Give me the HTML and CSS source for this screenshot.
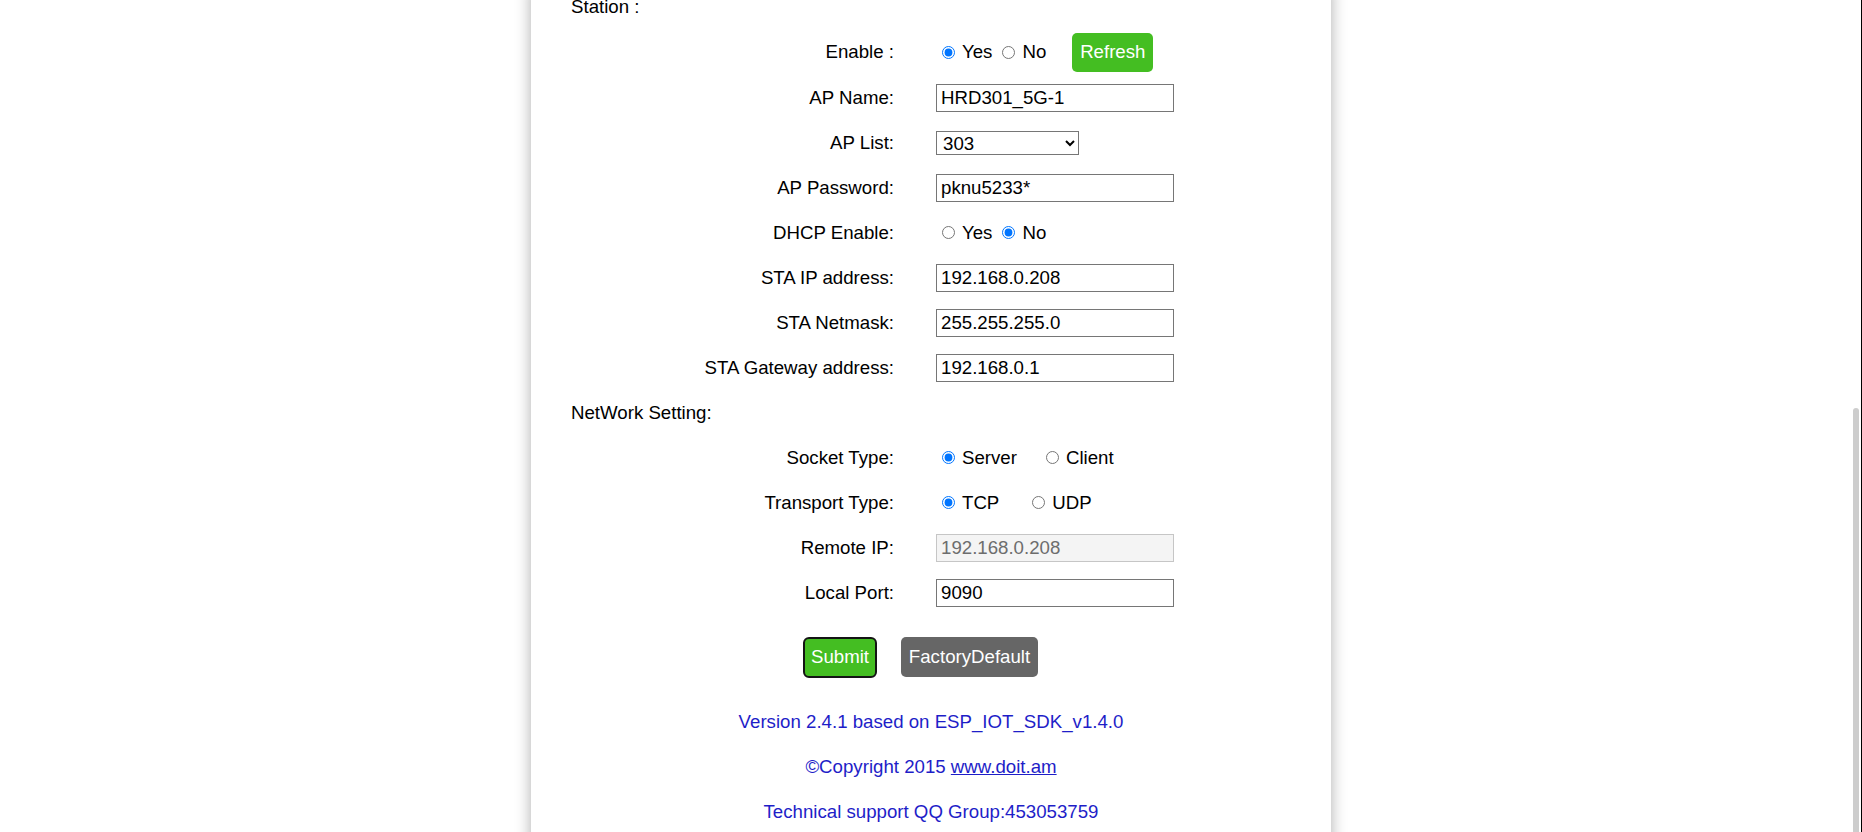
FILE: index.html
```html
<!DOCTYPE html>
<html lang="en">
<head>
<meta charset="utf-8">
<title>Config</title>
<link rel="stylesheet" href="styles.css">
</head>
<body>
<div class="panel">
  <div class="heading heading-top">Station :</div>

  <div class="row row-enable">
    <div class="label">Enable :</div>
    <div class="val">
      <label class="opt gap-yes"><input type="radio" name="sta" checked>Yes</label>
      <label class="opt"><input type="radio" name="sta">No</label>
      <button type="button" class="btn btn-green btn-refresh">Refresh</button>
    </div>
  </div>

  <div class="row">
    <div class="label">AP Name:</div>
    <div class="val"><input class="field" type="text" value="HRD301_5G-1"></div>
  </div>

  <div class="row">
    <div class="label">AP List:</div>
    <div class="val">
      <select class="picker">
        <option>303</option>
      </select>
    </div>
  </div>

  <div class="row">
    <div class="label">AP Password:</div>
    <div class="val"><input class="field" type="text" value="pknu5233*"></div>
  </div>

  <div class="row">
    <div class="label">DHCP Enable:</div>
    <div class="val">
      <label class="opt gap-yes"><input type="radio" name="dhcp">Yes</label>
      <label class="opt"><input type="radio" name="dhcp" checked>No</label>
    </div>
  </div>

  <div class="row">
    <div class="label">STA IP address:</div>
    <div class="val"><input class="field" type="text" value="192.168.0.208"></div>
  </div>

  <div class="row">
    <div class="label">STA Netmask:</div>
    <div class="val"><input class="field" type="text" value="255.255.255.0"></div>
  </div>

  <div class="row">
    <div class="label">STA Gateway address:</div>
    <div class="val"><input class="field" type="text" value="192.168.0.1"></div>
  </div>

  <div class="heading">NetWork Setting:</div>

  <div class="row">
    <div class="label">Socket Type:</div>
    <div class="val">
      <label class="opt gap-server"><input type="radio" name="sock" checked>Server</label>
      <label class="opt"><input type="radio" name="sock">Client</label>
    </div>
  </div>

  <div class="row">
    <div class="label">Transport Type:</div>
    <div class="val">
      <label class="opt gap-tcp"><input type="radio" name="proto" checked>TCP</label>
      <label class="opt"><input type="radio" name="proto">UDP</label>
    </div>
  </div>

  <div class="row">
    <div class="label">Remote IP:</div>
    <div class="val"><input class="field" type="text" value="192.168.0.208" disabled></div>
  </div>

  <div class="row">
    <div class="label">Local Port:</div>
    <div class="val"><input class="field" type="text" value="9090"></div>
  </div>

  <div class="actions">
    <button type="button" class="btn btn-green btn-submit">Submit</button>
    <button type="button" class="btn btn-gray btn-factory">FactoryDefault</button>
  </div>

  <div class="footer">
    <p class="foot-line">Version 2.4.1 based on ESP_IOT_SDK_v1.4.0</p>
    <p class="foot-line">&copy;Copyright 2015 <a href="#">www.doit.am</a></p>
    <p class="foot-line">Technical support QQ Group:453053759</p>
  </div>
</div>
<div class="scroll-thumb"></div>
<div class="window-edge"></div>
</body>
</html>
```

FILE: styles.css
```css
html, body {
  margin: 0;
  padding: 0;
  height: 100%;
  overflow: hidden;
  background: #ffffff;
}

body {
  display: flex;
  justify-content: center;
  align-items: flex-start;
  font-family: "Liberation Sans", Arial, sans-serif;
  font-size: 14pt;
  color: #000;
}

.panel {
  width: 800px;
  box-sizing: border-box;
  margin-top: -15px;
  padding: 0 40px 40px;
  min-height: calc(100vh + 60px);
  background: #fff;
  box-shadow: 0 0 15px rgba(0, 0, 0, 0.32);
}

.heading {
  height: 45px;
  display: flex;
  align-items: center;
}

.heading-top {
  height: 44px;
}

.row {
  display: grid;
  grid-template-columns: 323px 1fr;
  column-gap: 42px;
  align-items: center;
  height: 45px;
}

.row-enable {
  height: 46px;
}

.label {
  text-align: right;
  white-space: nowrap;
}

.val {
  display: flex;
  align-items: center;
}

.opt {
  display: inline-flex;
  align-items: center;
  white-space: nowrap;
}

.opt input {
  width: 13px;
  height: 13px;
  margin: 0 7px 0 6px;
}

.gap-yes {
  margin-right: 4px;
}

.gap-server {
  margin-right: 23px;
}

.gap-tcp {
  margin-right: 27px;
}

.field {
  box-sizing: border-box;
  width: 238px;
  height: 28px;
  margin: 0;
  padding: 0 4px;
  border: 1px solid #767676;
  border-radius: 0;
  font-family: "Liberation Sans", Arial, sans-serif;
  font-size: 14pt;
  color: #000;
  background: #fff;
}

.field:disabled {
  background: #f4f4f4;
  border-color: #c6c6c6;
  color: #6d6d6d;
}

.picker {
  box-sizing: border-box;
  width: 143px;
  height: 24px;
  margin: 0;
  padding: 0 2px;
  border: 1px solid #767676;
  border-radius: 0;
  font-family: "Liberation Sans", Arial, sans-serif;
  font-size: 14pt;
  color: #000;
  background: #fff;
}

.btn {
  box-sizing: border-box;
  font-family: "Liberation Sans", Arial, sans-serif;
  font-size: 14pt;
  color: #fff;
  border: none;
  border-radius: 5px;
  padding: 0;
  margin: 0;
  cursor: pointer;
  white-space: nowrap;
}

.btn-green {
  background: #44be22;
}

.btn-gray {
  background: #666666;
}

.btn-refresh {
  width: 81px;
  height: 39px;
  margin-left: 26px;
}

.actions {
  height: 84px;
  display: flex;
  align-items: center;
  gap: 24px;
  padding-left: 232px;
}

.btn-submit {
  width: 74px;
  height: 41px;
  border: 2px solid #141414;
  border-radius: 6px;
}

.btn-factory {
  width: 137px;
  height: 40px;
}

.footer {
  text-align: center;
  color: #1e1ec8;
}

.foot-line {
  margin: 0;
  height: 45px;
  line-height: 45px;
}

.foot-line a {
  color: #1e1ec8;
  text-decoration: underline;
}

.scroll-thumb {
  position: fixed;
  top: 408px;
  bottom: 0;
  right: 3px;
  width: 6px;
  border-radius: 3px 3px 0 0;
  background: #cdcdcd;
}

.window-edge {
  position: fixed;
  top: 0;
  bottom: 0;
  right: 0;
  width: 1px;
  background: #000;
}
```
